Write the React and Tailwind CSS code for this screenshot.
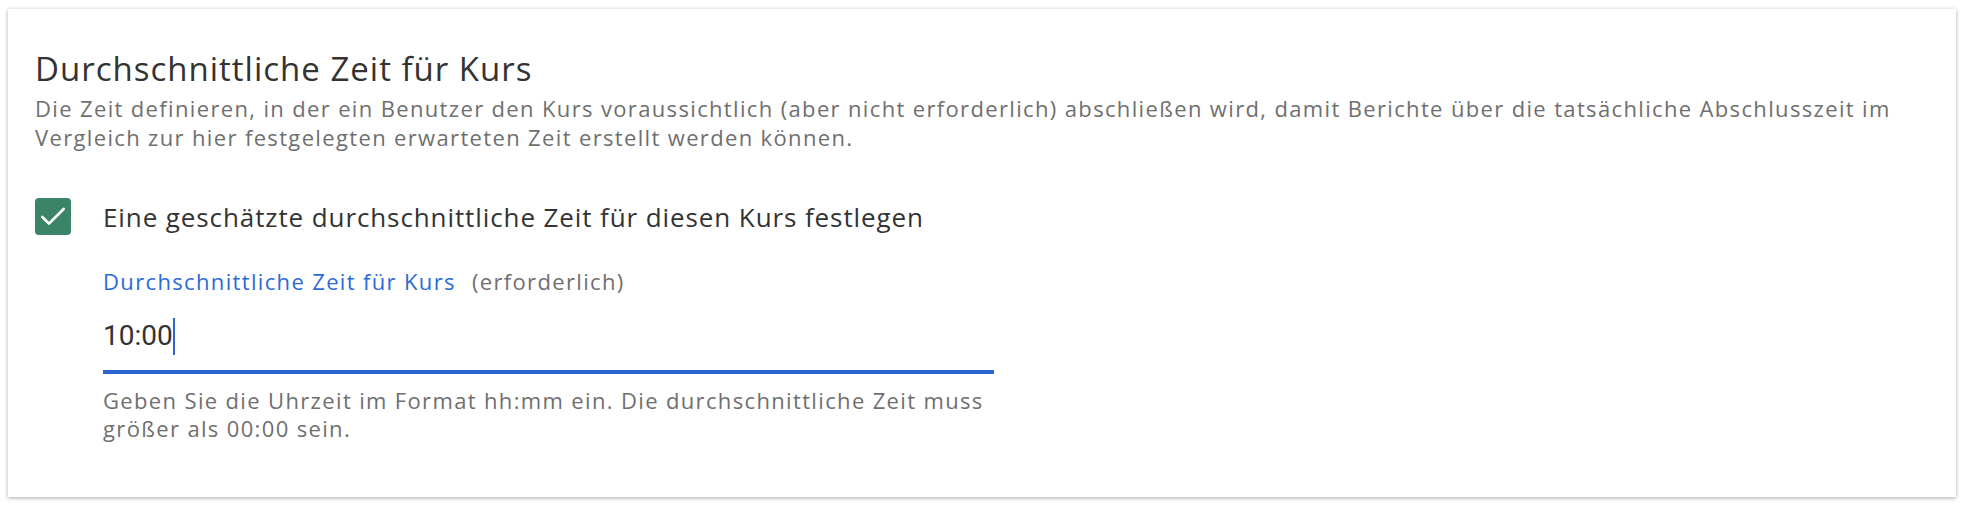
import { Check } from 'lucide-react'

export default function App() {
  return (
    <div className="min-h-screen bg-white pl-[8px] pt-[9px] font-['Open_Sans',sans-serif]">
      <div className="w-[1948px] h-[488px] bg-white shadow-[0_1px_4px_rgba(0,0,0,0.35)] pl-[27px] pt-[41px]">
        {/* Heading */}
        <h2 className="text-[33px] leading-[38px] tracking-[1px] text-[#333333]">Durchschnittliche Zeit für Kurs</h2>
        <p className="mt-[6px] text-[22px] leading-[29px] tracking-[1.35px] text-[#6f6f6f] pr-[40px]">
          Die Zeit definieren, in der ein Benutzer den Kurs voraussichtlich (aber nicht erforderlich) abschließen wird, damit Berichte über die tatsächliche Abschlusszeit im Vergleich zur hier festgelegten erwarteten Zeit erstellt werden können.
        </p>

        {/* Checkbox */}
        <label className="mt-[46px] flex items-center gap-[32px]">
          <span className="w-[36px] h-[37px] rounded-[4px] bg-[#3b8467] flex items-center justify-center flex-shrink-0">
            <Check size={32} strokeWidth={2} className="text-white" />
          </span>
          <span className="text-[26px] leading-[34px] tracking-[0.9px] text-[#333333]">
            Eine geschätzte durchschnittliche Zeit für diesen Kurs festlegen
          </span>
        </label>

        {/* Field */}
        <div className="ml-[68px] mt-[32px] w-[891px]">
          <div className="flex items-baseline gap-[16px] text-[22px] leading-[28px] tracking-[1.35px]">
            <span className="text-[#2c6bd6] font-medium">Durchschnittliche Zeit für Kurs</span>
            <span className="text-[#6f6f6f]">(erforderlich)</span>
          </div>
          <div className="mt-[21px] border-b-[4px] border-[#2e66d1] pb-[14px]">
            <div className="flex items-center h-[40px] font-['Roboto',sans-serif] text-[28px] text-[#333333]">
              <span>10:00</span>
              <span className="w-[2px] h-[37px] bg-[#2e66d1]" />
            </div>
          </div>
          <p className="mt-[12px] text-[22px] leading-[28px] tracking-[1.35px] text-[#6f6f6f]">
            Geben Sie die Uhrzeit im Format hh:mm ein. Die durchschnittliche Zeit muss größer als 00:00 sein.
          </p>
        </div>
      </div>
    </div>
  )
}
